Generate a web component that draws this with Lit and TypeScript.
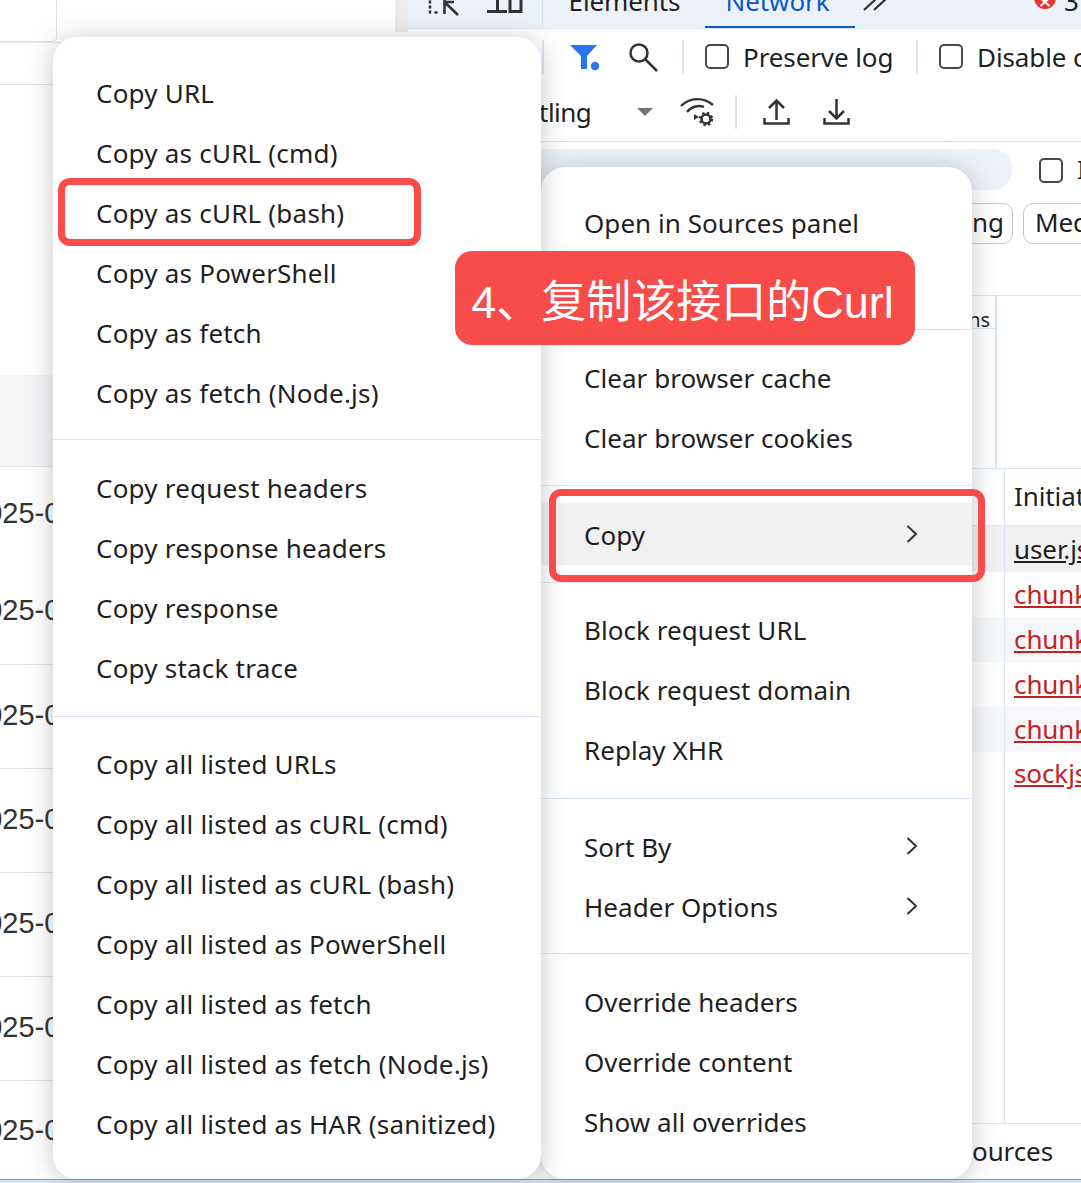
import { LitElement, html, css, nothing } from "lit";
import { customElement } from "lit/decorators.js";

type Entry = { t: string; sub?: boolean; hover?: boolean } | { above: number; below: number };

const LEFT: Entry[] = [
  { t: "Copy URL" }, { t: "Copy as cURL (cmd)" }, { t: "Copy as cURL (bash)" }, { t: "Copy as PowerShell" },
  { t: "Copy as fetch" }, { t: "Copy as fetch (Node.js)" },
  { above: 15, below: 19 },
  { t: "Copy request headers" }, { t: "Copy response headers" }, { t: "Copy response" }, { t: "Copy stack trace" },
  { above: 17, below: 18 },
  { t: "Copy all listed URLs" }, { t: "Copy all listed as cURL (cmd)" }, { t: "Copy all listed as cURL (bash)" },
  { t: "Copy all listed as PowerShell" }, { t: "Copy all listed as fetch" }, { t: "Copy all listed as fetch (Node.js)" },
  { t: "Copy all listed as HAR (sanitized)" },
];

const RIGHT: Entry[] = [
  { t: "Open in Sources panel" }, { t: "" },
  { above: 15, below: 19 },
  { t: "Clear browser cache" }, { t: "Clear browser cookies" },
  { above: 16, below: 20 },
  { t: "Copy", sub: true, hover: true },
  { above: 17, below: 18 },
  { t: "Block request URL" }, { t: "Block request domain" }, { t: "Replay XHR" },
  { above: 17, below: 19 },
  { t: "Sort By", sub: true }, { t: "Header Options", sub: true },
  { above: 15, below: 19 },
  { t: "Override headers" }, { t: "Override content" }, { t: "Show all overrides" },
];

const LEFT_ROWS: { h: number; line: boolean; band?: boolean; date?: boolean; lift?: number }[] = [
  { h: 42, line: false },
  { h: 42, line: true },
  { h: 67, line: true },
  { h: 224, line: false },
  { h: 91, line: false, band: true },
  { h: 94, line: true, date: true, lift: 0 },
  { h: 104, line: false, date: true, lift: 3 },
  { h: 104, line: true, date: true, lift: 3 },
  { h: 104, line: true, date: true, lift: 3 },
  { h: 104, line: true, date: true, lift: 3 },
  { h: 104, line: true, date: true, lift: 3 },
  { h: 99, line: true, date: true, lift: 0 },
];

const INIT = [
  { t: "user.js", h: 46, lh: 46, cls: "sel" },
  { t: "chunk-vendors.js", h: 45, lh: 44, cls: "err" },
  { t: "chunk-vendors.js", h: 45, lh: 44, cls: "err zebra" },
  { t: "chunk-vendors.js", h: 45, lh: 44, cls: "err" },
  { t: "chunk-vendors.js", h: 45, lh: 44, cls: "err zebra" },
  { t: "sockjs.js", h: 47, lh: 43, cls: "err" },
];

@customElement("app-root")
export class AppRoot extends LitElement {
  static styles = css`
    :host {
      display: block;
      width: 1081px;
      height: 1183px;
      position: relative;
      overflow: hidden;
      background: #fff;
      color: #1f1f1f;
      font-family: "Noto Sans", "Open Sans", sans-serif;
      font-size: 26px;
      letter-spacing: -0.1px;
    }
    .stage { display: flex; height: 1179px; }
    .bottom { height: 4px; background: linear-gradient(#8f9bad 0 1px, #dbe6f5 1px); }

    /* page behind devtools */
    .page { width: 408px; flex: none; position: relative; }
    .prow { box-sizing: border-box; display: flex; align-items: center; overflow: hidden; }
    .prow.line { border-top: 1px solid #e3e3e3; }
    .prow.band { background: #f4f5f7; }
    .date { font-family: "Liberation Sans", sans-serif; font-size: 29px; color: #333; margin-left: -30px; letter-spacing: 0; }
    .top { align-items: stretch; }
    .topbox { width: 57px; flex: none; box-sizing: border-box; border-right: 1px solid #e3e3e3; border-bottom: 1px solid #e3e3e3; border-bottom-right-radius: 5px; }
    .topfill { flex: 1; }
    .strip { width: 13px; flex: none; height: 32px; background: #ebebeb; }

    /* devtools */
    .dev { flex: 1; min-width: 0; display: flex; flex-direction: column; overflow: hidden; }
    .tabs { height: 29px; flex: none; box-sizing: border-box; background: #edf2fa; display: flex; overflow: hidden; position: relative; border-bottom: 1px solid #dde6f3; }
    .tabs svg { flex: none; display: block; }
    .tsep { width: 1px; flex: none; margin-left: 19px; background: #d6e2f2; }
    .tab { flex: none; margin-top: -16px; height: 45px; line-height: 35px; box-sizing: border-box; text-align: center; }
    .tab.el { width: 162px; padding-left: 1px; }
    .tab.net { width: 150px; color: #0b57d0; border-bottom: 3px solid #0b57d0; border-radius: 0 0 2px 2px; padding-right: 5px; }
    .errnum { margin-top: -16px; line-height: 35px; margin-left: 7px; }

    .row { flex: none; display: flex; align-items: center; box-sizing: border-box; white-space: nowrap; }
    .r1 { height: 57px; padding-left: 134px; padding-bottom: 2px; }
    .r2 { height: 56px; padding-left: 131px; padding-bottom: 3px; border-bottom: 1px solid #d6e2f2; }
    .vsep { width: 2px; height: 34px; flex: none; background: #dbe6f4; }
    .cb { width: 24px; height: 25px; flex: none; box-sizing: border-box; border: 2px solid #474747; border-radius: 5px; }
    .lbl { flex: none; margin-left: 14px; }
    .tling { width: 98px; flex: none; letter-spacing: -0.5px; }
    .row svg { flex: none; display: block; }

    .r3 { height: 54px; padding-top: 7px; padding-bottom: 0; align-items: flex-start; }
    .input { width: 604px; height: 41px; flex: none; background: #edf2fa; border-radius: 0 20px 20px 0; }
    .r3 .cb { margin: 9px 0 0 27px; }
    .r3 .lbl { line-height: 41px; }
    .r4 { height: 99px; padding-top: 7px; padding-left: 544px; align-items: flex-start; }
    .chip { flex: none; height: 41px; line-height: 37px; box-sizing: border-box; border: 1px solid #c4c7c5; border-radius: 10px; padding-left: 11px; overflow: hidden; }
    .c1 { width: 61px; padding-left: 19px; }
    .c2 { width: 120px; margin-left: 10px; }

    .over { flex: none; height: 174px; box-sizing: border-box; display: flex; border-top: 1px solid #dbe6f4; border-bottom: 1px solid #dbe6f4; }
    .ovl { width: 589px; flex: none; box-sizing: border-box; border-right: 2px solid #dbe6f4; }
    .ovc { height: 33px; box-sizing: border-box; border-bottom: 1px solid #dbe6f4; text-align: right; font-size: 20px; line-height: 47px; padding-right: 5px; }

    .table { flex: 1; display: flex; flex-direction: column; min-height: 0; }
    .thead { height: 57px; flex: none; box-sizing: border-box; border-bottom: 1px solid #dbe6f4; padding-left: 596px; }
    .cell { box-sizing: border-box; height: 100%; padding-left: 9px; border-left: 1px solid #dbe6f4; line-height: 54px; white-space: nowrap; }
    .trow { flex: none; padding-left: 596px; box-sizing: border-box; }
    .trow .cell { text-decoration: underline; font-size: 26px; }
    .sel { background: #f1f1f1; }
    .zebra { background: #f5f7fb; }
    .err .cell { color: #c5221f; }
    .tfill { flex: 1; padding-left: 596px; }
    .tfill .cell { padding: 0; }
    .foot { flex: none; height: 56px; box-sizing: border-box; border-top: 1px solid #dbe6f4; padding-left: 564px; line-height: 54px; }

    /* context menus */
    .menu { position: absolute; background: #fff; border-radius: 24px; padding-top: 27px; box-shadow: 0 2px 26px rgba(40, 44, 52, 0.26); box-sizing: border-box; }
    .mr { left: 541px; top: 167px; width: 431px; height: 1012px; letter-spacing: 0.05px; }
    .ml { left: 53px; top: 37px; width: 488px; height: 1142px; letter-spacing: 0.22px; }
    .item { height: 60px; box-sizing: border-box; display: flex; align-items: center; justify-content: space-between; padding: 0 54px 2px 43px; white-space: nowrap; }
    .item.hover { background: #f1f1f1; height: 62px; margin-top: -3px; padding-top: 2px; padding-bottom: 0; }
    .item svg { display: block; margin-top: -2px; }
    .msep { height: 1px; background: #dbe6f4; }

    /* annotations */
    .box { position: absolute; box-sizing: border-box; border: 7px solid #f84c4a; border-radius: 12px; }
    .b1 { left: 58px; top: 178px; width: 363px; height: 68px; }
    .b2 { left: 549px; top: 489px; width: 436px; height: 93px; }
    .note {
      position: absolute; left: 455px; top: 251px; width: 460px; height: 94px; border-radius: 17px; box-sizing: border-box; padding-right: 5px;
      background: #f84c4a; color: #fff; display: flex; align-items: center; justify-content: center;
      font-family: "Liberation Sans", "Noto Sans CJK SC", sans-serif; font-size: 45px; letter-spacing: 0; white-space: nowrap;
    }
  `;

  private entries(list: Entry[]) {
    return list.map((e) =>
      "t" in e
        ? html`<div class="item ${e.hover ? "hover" : ""}">
            <span>${e.t}</span>
            ${e.sub
              ? html`<svg width="12" height="20" viewBox="0 0 12 20" fill="none" stroke="#333" stroke-width="2"><path d="M1.5 2 L10 10 L1.5 18" /></svg>`
              : nothing}
          </div>`
        : html`<div class="msep" style="margin:${e.above}px 0 ${e.below}px"></div>`
    );
  }

  render() {
    return html`
      <div class="stage">
        <div class="page">
          ${LEFT_ROWS.map((r, i) =>
            i === 0
              ? html`<div class="prow top" style="height:${r.h}px">
                  <div class="topbox"></div>
                  <div class="topfill"></div>
                  <div class="strip"></div>
                </div>`
              : html`<div class="prow ${r.line ? "line" : ""} ${r.band ? "band" : ""}" style="height:${r.h}px;padding-bottom:${r.lift ?? 0}px">
                  ${r.date ? html`<span class="date">2025-06</span>` : nothing}
                </div>`
          )}
        </div>

        <div class="dev">
          <div class="tabs">
            <svg style="margin-left:20px" width="32" height="28" viewBox="0 0 32 28" fill="none" stroke="#333" stroke-width="2.6">
              <path d="M2 1.5v1M2 6.5v1M2 11.5v1M7.5 12.5h1" stroke-linecap="round" />
              <path d="M16.500 -2V14M16.500 2H26M16.500 2 L30 15" />
            </svg>
            <svg style="margin-left:27px" width="36" height="28" viewBox="0 0 36 28" fill="none" stroke="#333" stroke-width="3">
              <path d="M0 11.500H20M10.500 -2V11.500" />
              <path d="M23 -2V11.500H34V-2" />
            </svg>
            <div class="tsep"></div>
            <div class="tab el">Elements</div>
            <div class="tab net">Network</div>
            <svg style="margin-left:8px" width="28" height="28" viewBox="0 0 28 28" fill="none" stroke="#333" stroke-width="2.200">
              <path d="M1 10 L14 -2M11 10 L24 -2" />
            </svg>
            <svg style="margin-left:142px" width="24" height="28" viewBox="0 0 24 28">
              <circle cx="12" cy="-2" r="11" fill="#e8372f" />
              <path d="M7.500 -2 L16.500 6M16.500 -2 L7.500 6" stroke="#fff" stroke-width="2" />
            </svg>
            <span class="errnum">3</span>
          </div>

          <div class="row r1">
            <div class="vsep"></div>
            <svg style="margin-left:25px" width="32" height="30" viewBox="0 0 32 30">
              <path d="M1 3 H28 L18 14 V27 H12 V14 Z" fill="#2a76ee" />
              <circle cx="26" cy="24" r="4.200" fill="#2a76ee" />
            </svg>
            <svg style="margin-left:27px" width="32" height="30" viewBox="0 0 32 30" fill="none" stroke="#333" stroke-width="2.500">
              <circle cx="11" cy="11" r="8.500" />
              <path d="M17 17 L29 29" />
            </svg>
            <div class="vsep" style="margin-left:22px"></div>
            <div class="cb" style="margin-left:21px"></div>
            <span class="lbl" style="width:151px">Preserve log</span>
            <div class="vsep" style="margin-left:22px"></div>
            <div class="cb" style="margin-left:21px"></div>
            <span class="lbl">Disable cache</span>
          </div>

          <div class="row r2">
            <span class="tling">tling</span>
            <svg width="16" height="8" viewBox="0 0 16 8"><path d="M0 0H16L8 8Z" fill="#70757a" /></svg>
            <svg style="margin-left:27px" width="36" height="32" viewBox="0 0 36 32" fill="none" stroke="#333" stroke-width="2.400">
              <path d="M1 10 C10 1 24 1 33 9" />
              <path d="M7 16 C12 10 19 9 24 11" />
              <path d="M19 21 L14 18 V24 Z" fill="#333" stroke="none" />
              <circle cx="26" cy="23" r="4.500" stroke-width="2.600" />
              <circle cx="26" cy="23" r="6.200" stroke-width="2" stroke-dasharray="2.400 2.500" />
            </svg>
            <div class="vsep" style="margin-left:19px"></div>
            <svg style="margin-left:26px" width="27" height="28" viewBox="0 0 27 28" fill="none" stroke="#333" stroke-width="2.500">
              <path d="M13.500 22V3M6 10 L13.500 2.500 L21 10" />
              <path d="M1.500 20V25.500H25.500V20" />
            </svg>
            <svg style="margin-left:33px" width="27" height="28" viewBox="0 0 27 28" fill="none" stroke="#333" stroke-width="2.500">
              <path d="M13.500 1V20M6 13 L13.500 20.500 L21 13" />
              <path d="M1.500 20V25.500H25.500V20" />
            </svg>
          </div>

          <div class="row r3">
            <div class="input"></div>
            <div class="cb"></div>
            <span class="lbl">Invert</span>
          </div>

          <div class="row r4">
            <div class="chip c1">ng</div>
            <div class="chip c2">Media</div>
          </div>

          <div class="over">
            <div class="ovl"><div class="ovc">ns</div></div>
          </div>

          <div class="table">
            <div class="thead"><div class="cell">Initiator</div></div>
            ${INIT.map(
              (r) => html`<div class="trow ${r.cls}" style="height:${r.h}px"><div class="cell" style="line-height:${r.lh}px">${r.t}</div></div>`
            )}
            <div class="tfill"><div class="cell"></div></div>
            <div class="foot">ources</div>
          </div>
        </div>
      </div>
      <div class="bottom"></div>

      <div class="menu mr">${this.entries(RIGHT)}</div>
      <div class="menu ml">${this.entries(LEFT)}</div>
      <div class="box b1"></div>
      <div class="box b2"></div>
      <div class="note">4、复制该接口的Curl</div>
    `;
  }
}
